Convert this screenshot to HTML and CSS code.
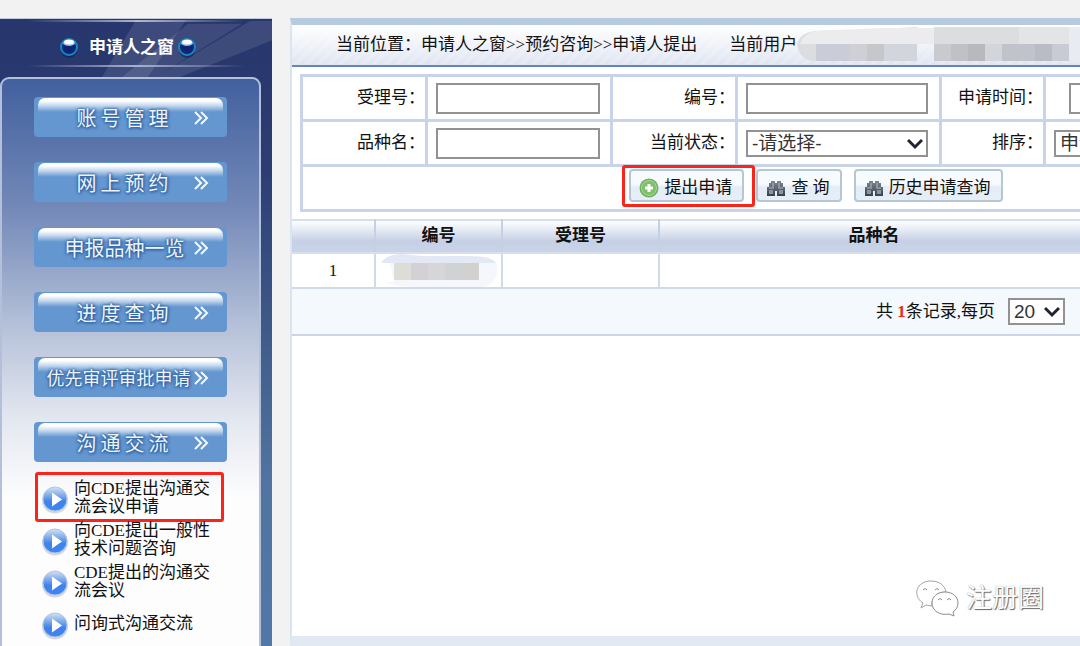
FILE: index.html
```html
<!DOCTYPE html>
<html lang="zh-CN">
  <head>
    <meta charset="utf-8">
    <title>申请人之窗</title>
    <link rel="stylesheet" href="styles.css">
  </head>
  <body>
    <svg class="defs" width="0" height="0">
      <defs>
        <linearGradient id="blue" x1="0" y1="0" x2="0" y2="1">
          <stop offset="0" stop-color="#d3e2f6" />
          <stop offset=".35" stop-color="#7fabe9" />
          <stop offset=".6" stop-color="#3f82ec" />
          <stop offset="1" stop-color="#3b86f5" />
        </linearGradient>
        <linearGradient id="metal" x1="0" y1="0" x2="0" y2="1">
          <stop offset="0" stop-color="#7d8791" />
          <stop offset="1" stop-color="#39424c" />
        </linearGradient>
      </defs>
      <symbol id="drop-icon" viewBox="0 0 18 20">
        <ellipse cx="9" cy="12" rx="8" ry="8" fill="#0b1f56" opacity=".6" />
        <circle cx="9" cy="9" r="8" fill="#0f2472" stroke="#1787c2" stroke-width="2" />
        <ellipse cx="9" cy="5" rx="6" ry="3" fill="#8db8e6" />
        <ellipse cx="9" cy="4" rx="5" ry="2.5" fill="#fff" />
      </symbol>
      <symbol id="chevrons" viewBox="0 0 16 16">
        <path d="M2 2l6 6-6 6M8 2l6 6-6 6" fill="none" stroke="#f3f8fd" stroke-width="2" />
      </symbol>
      <symbol id="play" viewBox="0 0 26 28">
        <ellipse cx="13" cy="14.5" rx="13" ry="13" fill="#b9bfca" opacity=".6" />
        <circle cx="13" cy="13" r="12" fill="url(#blue)" stroke="#b0c6e4" />
        <path d="M10 6.5l10 7-10 7z" fill="#fff" />
      </symbol>
      <symbol id="binoculars" viewBox="0 0 20 18">
        <path d="M1 8h2V4h2V2h4v2h2V2h4v2h2v4h2v9h-8v-5H9v5H1z" fill="url(#metal)" />
        <path d="M3 11h4v4H3zM13 11h4v4h-4z" fill="#8c959e" />
        <path d="M3 9h5M12 9h5M7 4v4M13 4v4" stroke="#b4bcc4" />
        <path d="M9 9h2v3H9z" fill="#59636d" />
      </symbol>
      <symbol id="arrow" viewBox="0 0 16 12">
        <path d="M1 2l7 7 7-7" fill="none" stroke="#1e2530" stroke-width="3" />
      </symbol>
    </svg>

    <div class="page">
      <aside class="sidebar">
        <header class="sidebar-title">
          <svg class="rays" viewBox="0 0 272 60" preserveAspectRatio="none">
            <path d="M136 1h50L148 60h-46z" fill="#fff" opacity=".1" />
            <path d="M188 5h54L156 60h-34z" fill="#fff" opacity=".1" />
            <path d="M250 2h22v20L180 60h-24z" fill="#fff" opacity=".1" />
          </svg>
          <svg class="drop"><use href="#drop-icon" /></svg>
          <h1>申请人之窗</h1>
          <svg class="drop"><use href="#drop-icon" /></svg>
        </header>

        <nav class="panel">
          <div class="menu">
            <button type="button">账号管理<svg><use href="#chevrons" /></svg></button>
            <button type="button">网上预约<svg><use href="#chevrons" /></svg></button>
            <button type="button" class="medium">申报品种一览<svg><use href="#chevrons" /></svg></button>
            <button type="button">进度查询<svg><use href="#chevrons" /></svg></button>
            <button type="button" class="long">优先审评审批申请<svg><use href="#chevrons" /></svg></button>
            <button type="button">沟通交流<svg><use href="#chevrons" /></svg></button>
          </div>
          <ul class="submenu">
            <li class="marked"><svg><use href="#play" /></svg><a href="#">向CDE提出沟通交流会议申请</a></li>
            <li><svg><use href="#play" /></svg><a href="#">向CDE提出一般性技术问题咨询</a></li>
            <li><svg><use href="#play" /></svg><a href="#">CDE提出的沟通交流会议</a></li>
            <li><svg><use href="#play" /></svg><a href="#">问询式沟通交流</a></li>
          </ul>
        </nav>
      </aside>

      <main class="content">
        <div class="crumbs">
          <span>当前位置：申请人之窗&gt;&gt;预约咨询&gt;&gt;申请人提出</span>
          <span class="user">当前用户</span>
          <svg class="mosaic" width="283" height="36">
            <path d="M0 18Q2 6 18 4L85 2 120 0V34H14Q1 30 0 17z" fill="#dcdde1" />
            <path d="M20 4L85 1h52v16H3Q6 6 20 4z" fill="#ececee" />
            <path d="M19 17h34v17H19z" fill="#cacdd8" />
            <path d="M53 17h17v17H53z" fill="#cfd0d5" />
            <path d="M70 17h17v17H70z" fill="#c6c7cb" />
            <path d="M87 17h33v17H87z" fill="#d3d5dd" />
            <path d="M137 0h85v17h-85z" fill="#dcdddf" />
            <path d="M222 0h50v17h-50z" fill="#e3e4e5" />
            <path d="M272 0h11v36h-11z" fill="#e8ebf2" />
            <path d="M137 17h17v17h-17z" fill="#c8cad0" />
            <path d="M154 17h17v17h-17z" fill="#bfc1c7" />
            <path d="M171 17h17v17h-17z" fill="#b7b9be" />
            <path d="M188 17h17v17h-17z" fill="#d3d5da" />
            <path d="M205 17h33v17h-33z" fill="#c0c3ca" />
            <path d="M238 17h17v17h-17z" fill="#b9bcc4" />
            <path d="M255 17h17v17h-17z" fill="#c8cbd4" />
          </svg>
        </div>

        <form class="search">
          <table>
            <colgroup>
              <col class="w-label"><col class="w-field"><col class="w-label"><col class="w-wide"><col class="w-short"><col>
            </colgroup>
            <tr>
              <th><label for="accept-no">受理号：</label></th>
              <td><input type="text" id="accept-no"></td>
              <th><label for="code">编号：</label></th>
              <td><input type="text" id="code" class="wide"></td>
              <th><label for="date">申请时间：</label></th>
              <td class="date"><input type="text" id="date"></td>
            </tr>
            <tr>
              <th><label for="name">品种名：</label></th>
              <td><input type="text" id="name"></td>
              <th><label for="status">当前状态：</label></th>
              <td>
                <span class="select wide">
                  <select id="status"><option>-请选择-</option></select>
                  <svg><use href="#arrow" /></svg>
                </span>
              </td>
              <th><label for="sort">排序：</label></th>
              <td>
                <span class="select wide">
                  <select id="sort"><option>申请时间</option></select>
                  <svg><use href="#arrow" /></svg>
                </span>
              </td>
            </tr>
            <tr>
              <td colspan="6">
                <div class="actions">
                  <button type="button" class="marked">
                    <svg viewBox="0 0 20 20">
                      <circle cx="10" cy="10" r="9.5" fill="#6fb25c" />
                      <circle cx="10" cy="10" r="7.5" fill="#7fc06a" stroke="#a8d79a" />
                      <path d="M10 6v8M6 10h8" stroke="#fff" stroke-width="3" />
                    </svg>
                    提出申请
                  </button>
                  <button type="button"><svg><use href="#binoculars" /></svg>查 询</button>
                  <button type="button"><svg><use href="#binoculars" /></svg>历史申请查询</button>
                </div>
              </td>
            </tr>
          </table>
        </form>

        <table class="records">
          <colgroup>
            <col class="r-index"><col class="r-code"><col class="r-accept"><col class="r-name"><col>
          </colgroup>
          <thead>
            <tr><th></th><th>编号</th><th>受理号</th><th>品种名</th><th></th></tr>
          </thead>
          <tbody>
            <tr>
              <td>1</td>
              <td>
                <svg class="hidden-code" width="118" height="33">
                  <path d="M1 9Q6 0 22 0L42 2H90Q112 2 116 9z" fill="#e2e8f4" />
                  <path d="M10 9H116Q121 27 104 33H40Q14 33 5 28H14z" fill="#f5f7fc" />
                  <path d="M14 9h17v17H14z" fill="#dcddd6" />
                  <path d="M31 9h17v17H31z" fill="#d4d0d5" />
                  <path d="M48 9h17v17H48z" fill="#d6d6d6" />
                  <path d="M65 9h17v17H65z" fill="#d0d3d3" />
                  <path d="M82 9h17v17H82z" fill="#d3d1ce" />
                </svg>
              </td>
              <td></td>
              <td></td>
              <td></td>
            </tr>
          </tbody>
        </table>
        <div class="pager">
          <label for="page-size">共 <b>1</b>条记录,每页</label>
          <span class="select">
            <select id="page-size"><option>20</option></select>
            <svg><use href="#arrow" /></svg>
          </span>
        </div>

        <div class="watermark">
          <svg viewBox="0 0 44 38">
            <g fill="#fff" stroke="#a3a3a3">
              <path d="M6 28l2-5C-3 16 1 1 16 1c9 0 14 5 15 11-9 0-15 6-14 14l-6-1z" />
              <path d="M30 12c8 0 13 5 13 11 0 4-2 7-5 9l1 4-5-2c-10 2-17-4-17-11 0-6 5-11 13-11z" stroke="#8c8c8c" />
              <path d="M8 10q2-3 4 0M20 10q2-3 4 0M23 20q2-3 4 0M32 20q2-3 4 0" fill="none" stroke="#8c8c8c" />
            </g>
          </svg>
          <span>注册圈</span>
        </div>
      </main>
    </div>
  </body>
</html>
```

FILE: styles.css
```css
* {
  box-sizing: border-box;
}
body {
  margin: 0;
  background: #f2f2f2;
  color: #111;
  font-family: "Liberation Serif", "Noto Sans CJK SC", serif;
  font-size: 17px;
  line-height: 18px;
}
button,
input,
select {
  font-family: inherit;
  margin: 0;
}
svg {
  display: block;
  flex: none;
}
.defs {
  position: absolute;
}
.page {
  display: flex;
  gap: 18px;
  min-height: 100vh;
  padding-top: 18px;
  overflow: hidden;
}

/* sidebar */
.sidebar {
  display: flex;
  flex-direction: column;
  flex: none;
  width: 272px;
  padding-right: 11px;
  background: linear-gradient(#27366c, #2c3d72 150px, #50749f 460px, #5078a8);
}
.sidebar-title {
  position: relative;
  display: flex;
  align-items: center;
  height: 59px;
  margin-right: -11px;
  padding-left: 60px;
  border-top: 1px solid #c3cbd9;
}
.sidebar-title::before,
.sidebar-title::after {
  content: "";
  position: absolute;
  left: 0;
  right: 0;
  top: 1px;
  height: 2px;
  background: linear-gradient(90deg, transparent 10%, #a9b2cb 50%, transparent 90%);
}
.sidebar-title::after {
  top: 46px;
}
.rays {
  position: absolute;
  inset: 0;
  width: 100%;
  height: 100%;
}
.sidebar-title h1 {
  position: relative;
  margin: 0 4px 0 11px;
  color: #fff;
  font-size: 17px;
  font-weight: bold;
}
.drop {
  position: relative;
  width: 18px;
  height: 20px;
}
.panel {
  flex: 1;
  padding: 18px 32px 0;
  border: 2px solid #b4c0da;
  border-bottom: 0;
  border-radius: 9px 9px 0 0;
  background: linear-gradient(#42609e, #7389b8 130px, #b4c0d8 245px, #e3e7f0 340px, #fdfdfd 420px);
}
.menu {
  display: flex;
  flex-direction: column;
  gap: 25px;
}
.menu button {
  position: relative;
  height: 40px;
  padding: 0 12px 0 0;
  border: 0;
  border-radius: 4px;
  background: #6496d0;
  color: #edf4fc;
  font-size: 20px;
  letter-spacing: 4px;
  text-shadow: 0 0 3px #2e5f9d, 0 0 3px #2e5f9d, 1px 1px 3px #2e5f9d;
  cursor: pointer;
  z-index: 0;
}
.menu button::before {
  content: "";
  position: absolute;
  z-index: -1;
  left: 4px;
  right: 4px;
  top: 1px;
  height: 14px;
  border-radius: 7px 7px 0 0;
  background: linear-gradient(#fff 20%, #c3d7ee 55%, #6496d0);
}
.menu .medium {
  letter-spacing: normal;
}
.menu .long {
  padding-right: 24px;
  font-size: 18px;
  letter-spacing: normal;
}
.menu svg {
  position: absolute;
  right: 18px;
  top: 13px;
  width: 16px;
  height: 16px;
}
.submenu {
  margin: 0;
  padding: 15px 0 0 8px;
  list-style: none;
}
.submenu li {
  position: relative;
  display: flex;
  align-items: center;
  gap: 6px;
  height: 42px;
}
.submenu svg {
  width: 26px;
  height: 28px;
  margin-top: 4px;
}
.submenu a {
  width: 138px;
  color: #111;
  text-decoration: none;
}
.marked::after {
  content: "";
  position: absolute;
  border: 3px solid #fc2418;
  border-radius: 3px;
}
.submenu .marked::after {
  inset: -5px 3px -3px -7px;
}

/* content */
.content {
  position: relative;
  flex: 1;
  min-width: 0;
  overflow: hidden;
  border-top: 7px solid #b8cae0;
  border-left: 2px solid #dbe4f1;
  border-bottom: 10px solid #e2e9f2;
  background: #fff;
}
.crumbs {
  display: flex;
  align-items: center;
  height: 42px;
  padding-left: 44px;
  border-bottom: 2px solid #6584bf;
  background: linear-gradient(#fff, rgba(255, 255, 255, 0)),
    repeating-linear-gradient(135deg, #dfe5f1 0 4px, #e4e9f4 4px 8px);
  white-space: nowrap;
}
.user {
  margin-left: 32px;
}
.search {
  width: 1024px;
  margin: 7px 8px;
}
.search table {
  width: 100%;
  border-collapse: collapse;
  table-layout: fixed;
}
.w-label {
  width: 125px;
}
.w-field {
  width: 185px;
}
.w-wide {
  width: 204px;
}
.w-short {
  width: 104px;
}
.search th,
.search td {
  height: 45px;
  padding: 0;
  border: 3px solid #c9d3e9;
}
.search th {
  font-weight: normal;
  text-align: right;
}
.search td {
  padding-left: 8px;
}
.search .date {
  padding-left: 23px;
}
.search input {
  display: block;
  width: 164px;
  height: 31px;
  padding: 0 6px;
  border: 2px solid #929292;
  font-size: 17px;
}
.search .wide {
  width: 182px;
}
.select {
  position: relative;
  display: block;
}
.select select {
  display: block;
  width: 100%;
  height: 27px;
  padding: 0 4px;
  border: 2px solid #929292;
  border-radius: 0;
  appearance: none;
  background: #fff;
  color: #333;
  font-family: "Liberation Sans", "Noto Sans CJK SC", sans-serif;
  font-size: 19px;
  line-height: 23px;
}
.select svg {
  position: absolute;
  right: 5px;
  top: 8px;
  width: 16px;
  height: 12px;
  pointer-events: none;
}
.actions {
  display: flex;
  justify-content: center;
  gap: 12px;
  padding-bottom: 5px;
}
.actions button {
  position: relative;
  display: flex;
  align-items: center;
  gap: 5px;
  height: 33px;
  padding: 0 10px 0 8px;
  border: 2px solid #b5c7d2;
  border-radius: 4px;
  background: linear-gradient(#f8fbfd 45%, #e4edf6 55%, #e6eef9);
  color: #111;
  font-size: 17px;
  cursor: pointer;
}
.actions svg {
  width: 20px;
  height: 20px;
  margin-top: 4px;
}
.actions .marked::after {
  inset: -6px -13px -7px -9px;
}

/* records */
.records {
  width: 1040px;
  border-collapse: collapse;
  table-layout: fixed;
}
.r-index {
  width: 83px;
}
.r-code {
  width: 127px;
}
.r-accept {
  width: 157px;
}
.r-name {
  width: 430px;
}
.records th,
.records td {
  height: 35px;
  padding: 0;
  border: 2px solid #d0daeb;
  border-left: 0;
  text-align: center;
}
.records th {
  height: 33px;
  padding-bottom: 2px;
  border-color: #d5dfee #c5d0e5;
  background: linear-gradient(#fff, #c5d0e5 65%, #c9d4e8);
}
.hidden-code {
  margin: 0 auto;
}
.pager {
  display: flex;
  align-items: center;
  gap: 13px;
  height: 47px;
  padding-left: 584px;
  border-bottom: 2px solid #ccd5e8;
  background: #f4f9fe;
  white-space: nowrap;
}
.pager b {
  color: #f22613;
}
.pager .select {
  width: 57px;
}

.watermark {
  position: absolute;
  right: 36px;
  bottom: 18px;
  display: flex;
  align-items: center;
  gap: 7px;
  color: #fff;
  font-size: 26px;
  line-height: 38px;
  text-shadow: 1px 1px 1px #666, 0 0 1px #888;
}
.watermark svg {
  width: 44px;
  height: 38px;
}
```
